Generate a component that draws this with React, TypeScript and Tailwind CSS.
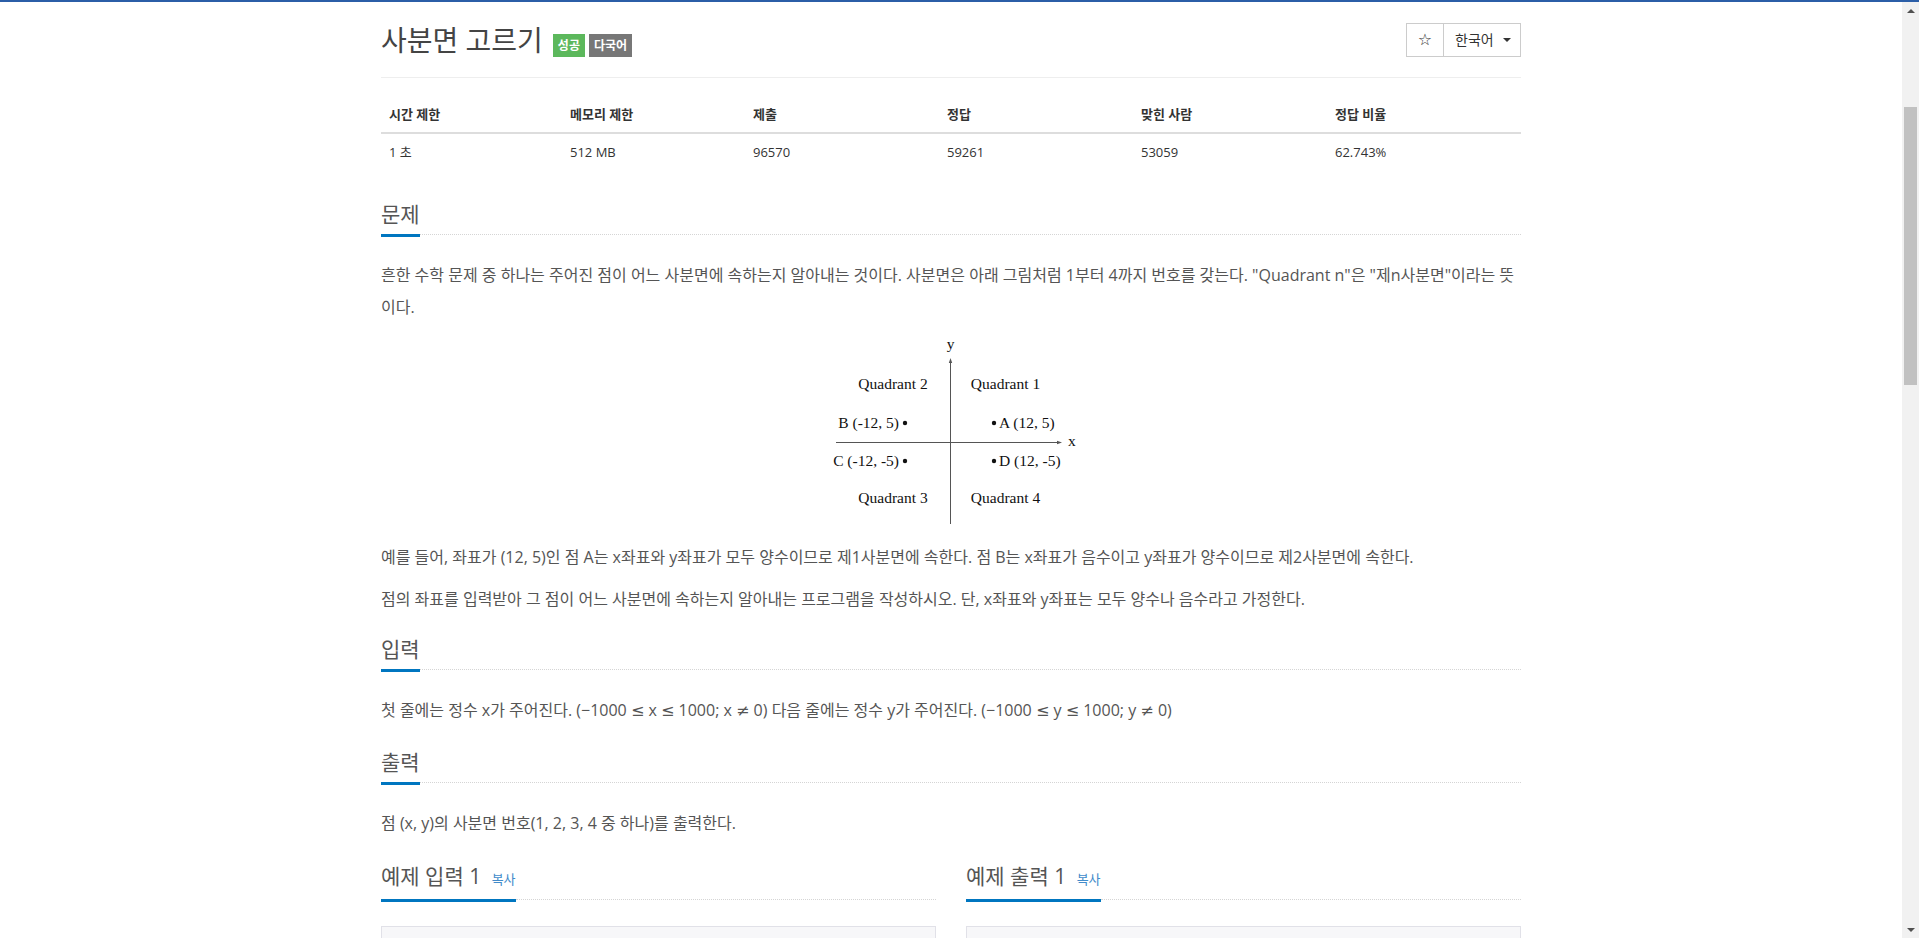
import React from 'react';

const stats = [
  { label: '시간 제한', value: '1 초' },
  { label: '메모리 제한', value: '512 MB' },
  { label: '제출', value: '96570' },
  { label: '정답', value: '59261' },
  { label: '맞힌 사람', value: '53059' },
  { label: '정답 비율', value: '62.743%' },
];

const Headline: React.FC<{ children: React.ReactNode }> = ({ children }) => (
  <div className="flex items-end">
    <h2 className="border-b-[3px] border-[#0076c0] pb-[5px] text-[21px] leading-[30px] font-normal text-[#555]">
      {children}
    </h2>
    <div className="flex-1 mb-[2px] border-b border-dotted border-[#d5d5d5]" />
  </div>
);

const Para: React.FC<{ children: React.ReactNode; className?: string }> = ({ children, className = '' }) => (
  <p className={`text-[16px] leading-[32px] text-[#555] ${className}`}>{children}</p>
);

// math symbols drawn with DejaVu, which has the wider glyphs seen in the shot
const M: React.FC<{ children: React.ReactNode }> = ({ children }) => (
  <span className="font-['DejaVu_Sans',sans-serif]">{children}</span>
);

const QuadrantFigure = () => (
  <svg width="270" height="195" viewBox="0 0 270 195" className="mx-auto block">
    <g stroke="#555" strokeWidth="1" fill="none">
      <line x1="134.5" y1="28" x2="134.5" y2="190" />
      <line x1="20" y1="108.5" x2="242" y2="108.5" />
    </g>
    <polygon points="134.5,24 132.8,29 136.2,29" fill="#555" />
    <polygon points="246,108.5 241,106.8 241,110.2" fill="#555" />
    <g fontFamily="'Liberation Serif', serif" fontSize="15.5" fill="#111">
      <text x="134.5" y="15" textAnchor="middle">y</text>
      <text x="252" y="112">x</text>
      <text x="77" y="55" textAnchor="middle">Quadrant 2</text>
      <text x="189.5" y="55" textAnchor="middle">Quadrant 1</text>
      <text x="83" y="94" textAnchor="end">B (-12, 5)</text>
      <text x="183" y="94">A (12, 5)</text>
      <text x="83" y="132" textAnchor="end">C (-12, -5)</text>
      <text x="183" y="132">D (12, -5)</text>
      <text x="77" y="169" textAnchor="middle">Quadrant 3</text>
      <text x="189.5" y="169" textAnchor="middle">Quadrant 4</text>
    </g>
    <g fill="#111">
      <circle cx="89" cy="89" r="2.2" />
      <circle cx="178" cy="89" r="2.2" />
      <circle cx="89" cy="127" r="2.2" />
      <circle cx="178" cy="127" r="2.2" />
    </g>
  </svg>
);

const Scrollbar = () => (
  <div className="w-[17px] shrink-0 bg-[#f1f1f1] flex flex-col items-center">
    <div className="h-[17px] w-full flex items-center justify-center">
      <div className="w-0 h-0 border-x-[4px] border-b-[4px] border-x-transparent border-b-[#505050]" />
    </div>
    <div className="h-[88px]" />
    <div className="w-[13px] h-[278px] bg-[#c1c1c1]" />
    <div className="flex-1" />
    <div className="h-[17px] w-full flex items-center justify-center">
      <div className="w-0 h-0 border-x-[4px] border-t-[4px] border-x-transparent border-t-[#505050]" />
    </div>
  </div>
);

export default function App() {
  return (
    <div className="h-[938px] overflow-hidden bg-white flex flex-col font-['Open_Sans','Noto_Sans_CJK_KR',sans-serif]">
      <div className="h-[2px] shrink-0 bg-[#2b5ea7]" />
      <div className="flex flex-1 min-h-0">
        <div className="flex-1 overflow-hidden">
          <div className="mx-auto w-[1140px]">
            {/* header */}
            <div className="h-[76px] border-b border-[#eee] flex items-center justify-between">
              <div className="flex items-center">
                <h1 className="text-[28px] leading-none font-normal text-[#444]">사분면 고르기</h1>
                <div className="ml-[10px] mt-[12px] flex gap-[4px]">
                  <span className="h-[23px] px-[5px] flex items-center bg-[#5cb85c] text-white text-[12px] font-bold">성공</span>
                  <span className="h-[23px] px-[5px] flex items-center bg-[#777] text-white text-[12px] font-bold">다국어</span>
                </div>
              </div>
              <div className="flex">
                <button type="button" className="w-[38px] h-[34px] border border-[#ccc] bg-white flex items-center justify-center text-[16px] text-[#333] font-['DejaVu_Sans',sans-serif]">
                  ☆
                </button>
                <button type="button" className="w-[77px] h-[34px] border border-l-0 border-[#ccc] bg-white flex items-center justify-between pl-[11px] pr-[9px] text-[14px] text-[#333]">
                  한국어
                  <span className="w-0 h-0 border-x-[4px] border-t-[4px] border-x-transparent border-t-[#333]" />
                </button>
              </div>
            </div>

            {/* stats table */}
            <div className="mt-[20px] text-[13px] text-[#333]">
              <div className="grid grid-cols-[181px_183px_194px_194px_194px_1fr] h-[36px] items-center border-b-2 border-[#ddd] font-bold">
                {stats.map((s) => (
                  <div key={s.label} className="px-[8px]">{s.label}</div>
                ))}
              </div>
              <div className="grid grid-cols-[181px_183px_194px_194px_194px_1fr] h-[37px] items-center">
                {stats.map((s) => (
                  <div key={s.label} className="px-[8px]">{s.value}</div>
                ))}
              </div>
            </div>

            {/* problem */}
            <section className="mt-[28px]">
              <Headline>문제</Headline>
              <Para className="mt-[22px]">
                흔한 수학 문제 중 하나는 주어진 점이 어느 사분면에 속하는지 알아내는 것이다. 사분면은 아래 그림처럼 1부터 4까지 번호를 갖는다. "Quadrant n"은 "제n사분면"이라는 뜻이다.
              </Para>
              <div className="mt-[11px]">
                <QuadrantFigure />
              </div>
              <Para className="mt-[12px]">
                예를 들어, 좌표가 (12, 5)인 점 A는 x좌표와 y좌표가 모두 양수이므로 제1사분면에 속한다. 점 B는 x좌표가 음수이고 y좌표가 양수이므로 제2사분면에 속한다.
              </Para>
              <Para className="mt-[10px]">
                점의 좌표를 입력받아 그 점이 어느 사분면에 속하는지 알아내는 프로그램을 작성하시오. 단, x좌표와 y좌표는 모두 양수나 음수라고 가정한다.
              </Para>
            </section>

            {/* input */}
            <section className="mt-[19px]">
              <Headline>입력</Headline>
              <Para className="mt-[22px]">
                첫 줄에는 정수 x가 주어진다. (−1000 <M>≤</M> x <M>≤</M> 1000; x <M>≠</M> 0) 다음 줄에는 정수 y가 주어진다. (−1000 <M>≤</M> y <M>≤</M> 1000; y <M>≠</M> 0)
              </Para>
            </section>

            {/* output */}
            <section className="mt-[20px]">
              <Headline>출력</Headline>
              <Para className="mt-[22px]">점 (x, y)의 사분면 번호(1, 2, 3, 4 중 하나)를 출력한다.</Para>
            </section>

            {/* samples */}
            <div className="mt-[22px] grid grid-cols-2 gap-[30px]">
              <section>
                <Headline>
                  예제 입력 1 <span className="ml-[5px] text-[13px] text-[#428bca]">복사</span>
                </Headline>
                <div className="mt-[24px] h-[60px] bg-[#f7f7f9] border border-[#e1e1e8]" />
              </section>
              <section>
                <Headline>
                  예제 출력 1 <span className="ml-[5px] text-[13px] text-[#428bca]">복사</span>
                </Headline>
                <div className="mt-[24px] h-[60px] bg-[#f7f7f9] border border-[#e1e1e8]" />
              </section>
            </div>
          </div>
        </div>
        <Scrollbar />
      </div>
    </div>
  );
}
